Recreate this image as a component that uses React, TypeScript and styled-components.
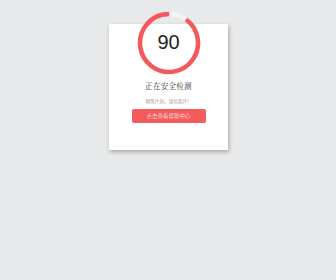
import React from "react";
import styled, { createGlobalStyle } from "styled-components";

const Global = createGlobalStyle`
  html, body { margin: 0; padding: 0; background: #e7e9ea; }
  body { font-family: "Noto Sans CJK SC", "Noto Sans", sans-serif; }
`;

const Page = styled.div`
  width: 336px;
  height: 280px;
  display: flex;
  flex-direction: column;
  align-items: center;
  padding-top: 24px;
  box-sizing: border-box;
`;

const Card = styled.div`
  width: 119px;
  margin-left: 1px;
  background: #ffffff;
  box-shadow: 1px 2px 4px rgba(0, 0, 0, 0.28);
  display: flex;
  flex-direction: column;
  align-items: center;
  padding-bottom: 27px;
`;

const Ring = styled.div`
  position: relative;
  width: 64px;
  height: 64px;
  margin-top: -13px;
`;

const Score = styled.div`
  position: absolute;
  inset: 0;
  display: flex;
  align-items: center;
  justify-content: center;
  font-family: "Liberation Sans", Arial, sans-serif;
  font-size: 20px;
  color: #222;
  padding-bottom: 2px;
`;

const Title = styled.div`
  margin-top: 6px;
  font-family: "Noto Serif CJK SC", "Noto Sans CJK SC", serif;
  font-size: 7.5px;
  line-height: 10px;
  color: #333;
  letter-spacing: 0.3px;
`;

const Sub = styled.div`
  margin-top: 7px;
  font-size: 4.6px;
  line-height: 6px;
  color: #9a9a9a;
`;

const Button = styled.div`
  margin-top: 5px;
  width: 74px;
  height: 14px;
  border-radius: 2px;
  background: #f35a5c;
  color: #ffd6d6;
  font-size: 5.5px;
  display: flex;
  align-items: center;
  justify-content: center;
`;

const R = 29;
const C = 2 * Math.PI * R;

export default function App() {
  return (
    <>
      <Global />
      <Page>
        <Card>
          <Ring>
            <svg width="64" height="64" viewBox="0 0 64 64">
              <circle cx="32" cy="32" r={R} fill="none" stroke="#f3f3f3" strokeWidth="4.5" />
              <circle
                cx="32"
                cy="32"
                r={R}
                fill="none"
                stroke="#f4585a"
                strokeWidth="4.5"
                strokeDasharray={`${C * 0.9} ${C}`}
                transform="rotate(-54 32 32)"
              />
            </svg>
            <Score>90</Score>
          </Ring>
          <Title>正在安全检测</Title>
          <Sub>稍等片刻，请勿离开！</Sub>
          <Button>点击查看帮助中心</Button>
        </Card>
      </Page>
    </>
  );
}
